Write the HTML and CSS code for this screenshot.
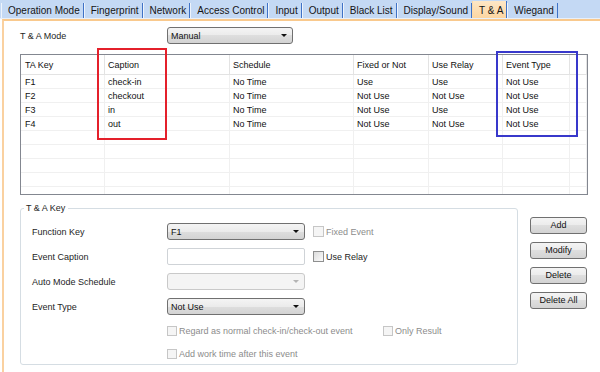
FILE: index.html
```html
<!DOCTYPE html>
<html lang="en">
<head>
  <meta charset="UTF-8">
  <title>T &amp; A</title>
  <link rel="stylesheet" href="styles.css">
</head>
<body>

<div class="tabs">
  <div class="tab">Operation Mode</div>
  <div class="tab">Fingerprint</div>
  <div class="tab">Network</div>
  <div class="tab">Access Control</div>
  <div class="tab">Input</div>
  <div class="tab">Output</div>
  <div class="tab">Black List</div>
  <div class="tab">Display/Sound</div>
  <div class="tab active">T &amp; A</div>
  <div class="tab">Wiegand</div>
</div>

<div class="page">
  <div class="mode-row">
    <span class="mode-label">T &amp; A Mode</span>
    <div class="combo wide">Manual<i class="arrow"></i></div>
  </div>

  <div class="list">
    <div class="grid">
      <span class="th">TA Key</span><span class="th">Caption</span><span class="th">Schedule</span><span class="th">Fixed or Not</span><span class="th">Use Relay</span><span class="th">Event Type</span><span class="th"></span>
      <span>F1</span><span>check-in</span><span>No Time</span><span>Use</span><span>Use</span><span>Not Use</span><span></span>
      <span>F2</span><span>checkout</span><span>No Time</span><span>Not Use</span><span>Not Use</span><span>Not Use</span><span></span>
      <span>F3</span><span>in</span><span>No Time</span><span>Not Use</span><span>Use</span><span>Not Use</span><span></span>
      <span>F4</span><span>out</span><span>No Time</span><span>Not Use</span><span>Not Use</span><span>Not Use</span><span></span>
      <span></span><span></span><span></span><span></span><span></span><span></span><span></span>
      <span></span><span></span><span></span><span></span><span></span><span></span><span></span>
      <span></span><span></span><span></span><span></span><span></span><span></span><span></span>
      <span></span><span></span><span></span><span></span><span></span><span></span><span></span>
      <span></span><span></span><span></span><span></span><span></span><span></span><span></span>
    </div>
    <div class="mark red"></div>
    <div class="mark blue"></div>
  </div>

  <div class="bottom">
    <fieldset class="group">
      <legend>T &amp; A Key</legend>

      <div class="row first">
        <span class="label">Function Key</span>
        <div class="combo field">F1<i class="arrow"></i></div>
        <label class="check off"><i class="box big"></i>Fixed Event</label>
      </div>
      <div class="row">
        <span class="label">Event Caption</span>
        <div class="textbox field"></div>
        <label class="check"><i class="box big"></i>Use Relay</label>
      </div>
      <div class="row">
        <span class="label">Auto Mode Schedule</span>
        <div class="combo field disabled"><span></span><i class="arrow"></i></div>
      </div>
      <div class="row">
        <span class="label">Event Type</span>
        <div class="combo field">Not Use<i class="arrow"></i></div>
      </div>
      <div class="row sub">
        <label class="check off regard"><i class="box"></i>Regard as normal check-in/check-out event</label>
        <label class="check off"><i class="box"></i>Only Result</label>
      </div>
      <div class="row sub">
        <label class="check off"><i class="box"></i>Add work time after this event</label>
      </div>
    </fieldset>

    <div class="buttons">
      <div class="btn">Add</div>
      <div class="btn">Modify</div>
      <div class="btn">Delete</div>
      <div class="btn">Delete All</div>
    </div>
  </div>
</div>

</body>
</html>
```

FILE: styles.css
```css
body { margin: 0; width: 600px; height: 372px; overflow: hidden; background: #fff; color: #1e1e1e; font-family: "Liberation Sans", Arial, sans-serif; font-size: 9px; }

/* tab strip */
.tabs { display: flex; align-items: flex-start; height: 18px; padding-left: 1px; background: #c4d9f4; border-bottom: 1px solid #e8f0fa; font-size: 10px; }
.tab { margin-top: 3px; height: 15px; line-height: 15px; padding: 0 3px 0 6px; border-left: 1px solid #eef4fc; border-right: 1px solid #3f72c6; white-space: nowrap; color: #141414; }
.tab.active { margin-top: 1px; padding-top: 2px; background: linear-gradient(#fee7c6, #fcd6a2); border-left-color: #fcd9a8; }

/* page */
.page { margin-left: 2px; border-left: 2px solid #fad1a0; border-top: 2px solid #f9c98d; padding: 6px 0 0 16px; height: 360px; }

.mode-row { display: flex; align-items: center; height: 17px; }
.mode-label { width: 147px; }

.combo { display: flex; align-items: center; justify-content: space-between; box-sizing: border-box; height: 17px; padding: 0 5px 0 3px; border: 1px solid #707070; border-radius: 3px; background: linear-gradient(#f4f4f4, #ebebeb 50%, #dedede 50%, #d3d3d3); color: #111; }
.combo.wide { width: 126px; }
.combo.disabled { border-color: #c9c9c9; background: #f4f4f4; }
.arrow { width: 0; height: 0; border-top: 3px solid #111; border-left: 3px solid transparent; border-right: 3px solid transparent; }
.combo.disabled .arrow { border-top-color: #b4b4b4; }

/* list view */
.list { position: relative; margin-top: 10px; width: 568px; height: 141px; box-sizing: border-box; border: 1px solid #838790; }
.grid { display: grid; grid-template-columns: 84px 125px 124px 75px 74px 67px 1fr; grid-template-rows: 20px; grid-auto-rows: 14px; height: 139px; overflow: hidden; }
.grid span { box-sizing: border-box; padding: 1px 0 0 3px; line-height: 13px; border-right: 1px solid #f0f0f0; border-bottom: 1px solid #f0f0f0; white-space: nowrap; overflow: hidden; color: #111; }
.grid span:nth-child(7n+1) { padding-left: 4px; }
.grid .th { line-height: 18px; border-color: #e3e3e3; }

.mark { position: absolute; box-sizing: border-box; border: 2px solid; }
.mark.red { left: 76px; top: -7px; width: 70px; height: 92px; border-color: #e4202b; }
.mark.blue { left: 475px; top: -4px; width: 82px; height: 86px; border-color: #3838cb; }

/* key group */
.bottom { display: flex; align-items: flex-start; margin-top: 8px; }
.group { margin: 0; min-width: 0; width: 498px; box-sizing: border-box; padding: 0 0 5px 11px; border: 1px solid #d5dde3; border-radius: 3px; }
.group legend { margin-left: -8px; padding: 0 3px 0 2px; line-height: 11px; }

.row { display: flex; align-items: center; height: 17px; margin-top: 8px; }
.row.first { margin-top: 9px; }
.row.sub { height: 11px; margin-top: 10px; padding-left: 135px; }
.row + .row.sub + .row.sub { margin-top: 12px; }
.label { width: 135px; }
.field { width: 138px; }
.textbox { box-sizing: border-box; height: 17px; border: 1px solid #cfd3d7; border-radius: 2px; background: #fff; }

.check { display: flex; align-items: center; gap: 2px; margin-left: 8px; white-space: nowrap; }
.row.sub .check { margin-left: 0; }
.check.regard { width: 216px; }
.check.off { color: #8c8c8c; }
.box { box-sizing: border-box; width: 10px; height: 10px; border: 1px solid #8e8f8f; background: linear-gradient(135deg, #dcdcdc, #fbfbfb); }
.box.big { width: 11px; height: 11px; }
.check.off .box { border-color: #c6c6c6; background: #f5f5f5; }

.buttons { display: flex; flex-direction: column; gap: 8px; margin-left: 12px; padding-top: 14px; }
.btn { box-sizing: border-box; width: 57px; height: 17px; line-height: 15px; text-align: center; border: 1px solid #707070; border-radius: 3px; background: linear-gradient(#f4f4f4, #ebebeb 50%, #dedede 50%, #d3d3d3); color: #111; }
```
